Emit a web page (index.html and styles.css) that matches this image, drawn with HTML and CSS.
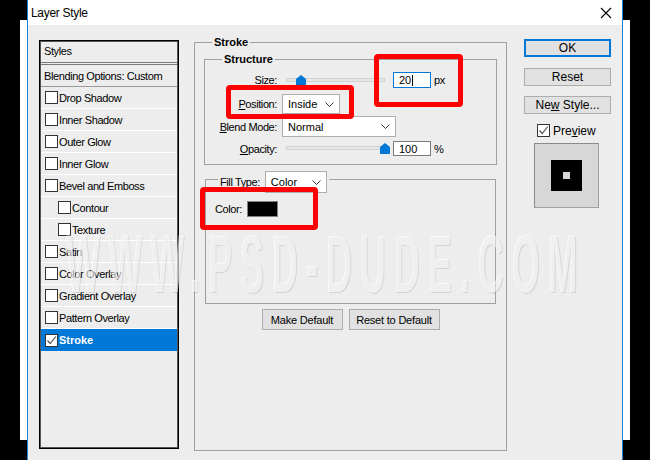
FILE: index.html
```html
<!DOCTYPE html>
<html>
<head>
<meta charset="utf-8">
<title>Layer Style</title>
<link rel="stylesheet" href="styles.css">
</head>
<body>
<div class="backwin"></div>
<div class="dialog">
  <div class="titlebar">
    <span class="title">Layer Style</span>
    <svg class="close" width="12" height="12" viewBox="0 0 12 12"><path d="M1 1 L11 11 M11 1 L1 11" stroke="#000" stroke-width="1.1" fill="none"/></svg>
  </div>
  <div class="content">
    <div class="styles-panel">
      <div class="sp-head">Styles</div>
      <div class="sp-row sp-blend">Blending Options: Custom</div>
      <div class="sp-row"><span class="cb"></span>Drop Shadow</div>
      <div class="sp-row"><span class="cb"></span>Inner Shadow</div>
      <div class="sp-row"><span class="cb"></span>Outer Glow</div>
      <div class="sp-row"><span class="cb"></span>Inner Glow</div>
      <div class="sp-row"><span class="cb"></span>Bevel and Emboss</div>
      <div class="sp-row sp-sub"><span class="cb"></span>Contour</div>
      <div class="sp-row sp-sub"><span class="cb"></span>Texture</div>
      <div class="sp-row"><span class="cb"></span>Satin</div>
      <div class="sp-row"><span class="cb"></span>Color Overlay</div>
      <div class="sp-row"><span class="cb"></span>Gradient Overlay</div>
      <div class="sp-row"><span class="cb"></span>Pattern Overlay</div>
      <div class="sp-row sp-active"><span class="cb"><svg width="11" height="11" viewBox="0 0 11 11"><path d="M1.5 5.5 L4.2 8.5 L9.8 1.5" stroke="#555" stroke-width="1.2" fill="none"/></svg></span>Stroke</div>
    </div>

    <fieldset class="grp grp-stroke">
      <legend class="lg-bold">Stroke</legend>
      <fieldset class="grp grp-structure">
        <legend class="lg-bold">Structure</legend>
        <div class="frow frow-size">
          <span class="flabel"><u>S</u>ize:</span>
          <div class="slider">
            <div class="track"></div>
            <svg class="thumb" style="left:10px" width="10" height="11" viewBox="0 0 10 11"><path d="M5 0 L10 4 L10 11 L0 11 L0 4 Z" fill="#0078d7"/></svg>
          </div>
          <div class="num num-focus">20<span class="caret"></span></div>
          <span class="unit">px</span>
        </div>
        <div class="frow frow-pos">
          <span class="flabel"><u>P</u>osition:</span>
          <div class="select sel-pos">Inside<svg class="chev" width="9" height="5" viewBox="0 0 9 5"><path d="M0.5 0.5 L4.5 4.5 L8.5 0.5" stroke="#333" stroke-width="1" fill="none"/></svg></div>
        </div>
        <div class="frow frow-blend">
          <span class="flabel"><u>B</u>lend Mode:</span>
          <div class="select sel-blend">Normal<svg class="chev" width="9" height="5" viewBox="0 0 9 5"><path d="M0.5 0.5 L4.5 4.5 L8.5 0.5" stroke="#333" stroke-width="1" fill="none"/></svg></div>
        </div>
        <div class="frow frow-op">
          <span class="flabel"><u>O</u>pacity:</span>
          <div class="slider">
            <div class="track"></div>
            <svg class="thumb" style="left:94px" width="10" height="11" viewBox="0 0 10 11"><path d="M5 0 L10 4 L10 11 L0 11 L0 4 Z" fill="#0078d7"/></svg>
          </div>
          <div class="num">100</div>
          <span class="unit">%</span>
        </div>
      </fieldset>

      <fieldset class="grp grp-fill">
        <legend class="lg-fill"><span class="fill-label"><u>F</u>ill Type:</span><div class="select sel-fill">Color<svg class="chev" width="9" height="5" viewBox="0 0 9 5"><path d="M0.5 0.5 L4.5 4.5 L8.5 0.5" stroke="#333" stroke-width="1" fill="none"/></svg></div></legend>
        <div class="color-row"><span>Color:</span><span class="swatch"></span></div>
      </fieldset>

      <div class="btnrow">
        <div class="btn btn-md">Make Default</div>
        <div class="btn btn-rd">Reset to Default</div>
      </div>
    </fieldset>

    <div class="rightcol">
      <div class="rbtn rbtn-ok">OK</div>
      <div class="rbtn">Reset</div>
      <div class="rbtn"><span>Ne<u>w</u> Style...</span></div>
      <div class="preview-row"><span class="cb"><svg width="11" height="11" viewBox="0 0 11 11"><path d="M1.5 5.5 L4.2 8.5 L9.8 1.5" stroke="#555" stroke-width="1.2" fill="none"/></svg></span><span>Pre<u>v</u>iew</span></div>
      <div class="preview-box"><div class="pv-square"><div class="pv-dot"></div></div></div>
    </div>
  </div>

  <div class="watermark">WWW.PSD-DUDE.COM</div>
  <div class="mark mark-size"></div>
  <div class="mark mark-pos"></div>
  <div class="mark mark-color"></div>
</div>
</body>
</html>
```
FILE: styles.css
```css
html, body {
  margin: 0;
  padding: 0;
}
body {
  width: 650px;
  height: 460px;
  background: #000;
  overflow: hidden;
  position: relative;
  font-family: "Liberation Sans", Arial, sans-serif;
  font-size: 11px;
  color: #000;
}
.backwin {
  position: absolute;
  left: 20px;
  top: 20px;
  width: 610px;
  height: 420px;
  background: #fff;
}
.dialog {
  position: absolute;
  left: 27px;
  top: 0;
  width: 596px;
  height: 460px;
  box-sizing: border-box;
  border-left: 1px solid #1883d7;
  border-right: 1px solid #1883d7;
  background: #ededed;
  overflow: hidden;
}
.titlebar {
  height: 25px;
  background: #fff;
  display: flex;
  align-items: center;
  justify-content: space-between;
  padding: 0 10px 0 3px;
}
.title {
  font-size: 12px;
  letter-spacing: -0.3px;
}
.close {
  display: block;
  margin-top: 1px;
}
.content {
  display: flex;
  align-items: flex-start;
  padding-left: 11px;
}

/* left styles list */
.styles-panel {
  margin-top: 15px;
  width: 140px;
  height: 409px;
  box-sizing: border-box;
  border: 1px solid #000;
  box-shadow: inset 1px 1px 0 #555, inset -1px -1px 0 #555;
  padding: 1px;
  letter-spacing: -0.4px;
}
.sp-head {
  height: 20px;
  line-height: 19px;
  padding-left: 3px;
  border-bottom: 3px double #7a7a7a;
}
.sp-row {
  height: 21px;
  border-bottom: 1px solid #fff;
  display: flex;
  align-items: center;
  padding-left: 4px;
}
.sp-blend {
  padding-left: 3px;
  border-bottom-color: #9a9a9a;
}
.sp-sub {
  padding-left: 17px;
}
.sp-active {
  background: #0078d7;
  color: #fff;
  font-weight: bold;
  letter-spacing: 0;
  border-bottom: none;
  height: 22px;
}
.cb {
  width: 13px;
  height: 13px;
  box-sizing: border-box;
  border: 1px solid #333;
  background: #fff;
  margin-right: 1px;
  display: flex;
  align-items: center;
  justify-content: center;
  flex: none;
}
.cb svg {
  display: block;
}

/* group boxes */
.grp {
  margin: 0;
  border: 1px solid #a0a0a0;
  min-width: 0;
  box-sizing: border-box;
}
.lg-bold {
  font-weight: bold;
  line-height: 14px;
  padding: 0 2px;
  margin-left: 8px;
}
.grp-stroke {
  margin-top: 10px;
  margin-left: 15px;
  width: 313px;
  height: 416px;
  padding: 0 9px;
}
.grp-structure {
  margin-top: 3px;
  width: 293px;
  padding: 0 9px 8px;
}
.frow {
  display: flex;
  align-items: center;
  letter-spacing: -0.4px;
}
.frow-size { margin-top: 6px; height: 16px; }
.frow-pos { margin-top: 6px; height: 20px; }
.frow-blend { margin-top: 2px; height: 21px; }
.frow-op { margin-top: 4px; height: 15px; }
.flabel {
  width: 63px;
  margin-right: 5px;
  text-align: right;
  flex: none;
  white-space: nowrap;
}
.slider {
  position: relative;
  width: 99px;
  height: 11px;
  margin-left: 4px;
  flex: none;
}
.track {
  margin-top: 3px;
  height: 4px;
  box-sizing: border-box;
  border: 1px solid #d2d2d2;
  background: #e7e7e7;
}
.thumb {
  position: absolute;
  top: 0;
  display: block;
}
.num {
  margin-left: 8px;
  width: 38px;
  height: 100%;
  box-sizing: border-box;
  border: 1px solid #7a7a7a;
  background: #fff;
  padding-left: 5px;
  display: flex;
  align-items: center;
  flex: none;
  letter-spacing: 0;
}
.num-focus {
  border-color: #0078d7;
}
.caret {
  width: 1px;
  height: 11px;
  background: #000;
  margin-left: 1px;
}
.unit {
  margin-left: 3px;
}
.select {
  height: 100%;
  box-sizing: border-box;
  border: 1px solid #adadad;
  background: #fff;
  display: flex;
  align-items: center;
  justify-content: space-between;
  padding: 0 5px 0 5px;
  flex: none;
  letter-spacing: 0;
}
.chev {
  display: block;
}
.sel-pos { width: 58px; }
.sel-blend { width: 114px; }

.grp-fill {
  margin-left: 1px;
  width: 291px;
  padding: 0 9px 86px;
}
.lg-fill {
  padding: 6px 2px 0;
  margin-left: 3px;
  display: flex;
  align-items: center;
  letter-spacing: -0.4px;
}
.fill-label {
  margin-right: 5px;
}
.sel-fill {
  width: 62px;
  height: 22px;
}
.color-row {
  margin-top: 8px;
  height: 16px;
  display: flex;
  align-items: center;
  letter-spacing: -0.4px;
}
.swatch {
  margin-left: 5px;
  width: 31px;
  height: 16px;
  box-sizing: border-box;
  border: 1px solid #808080;
  background: #000;
}
.btnrow {
  margin-top: 5px;
  display: flex;
  justify-content: center;
  gap: 6px;
}
.btn {
  height: 21px;
  box-sizing: border-box;
  border: 1px solid #adadad;
  background: #e1e1e1;
  display: flex;
  align-items: center;
  justify-content: center;
  letter-spacing: -0.2px;
}
.btn-md { width: 81px; }
.btn-rd { width: 91px; }

/* right column */
.rightcol {
  margin-top: 14px;
  margin-left: 17px;
  width: 87px;
  display: flex;
  flex-direction: column;
  font-size: 12px;
}
.rbtn {
  height: 18px;
  box-sizing: border-box;
  border: 1px solid #adadad;
  background: #e1e1e1;
  display: flex;
  align-items: center;
  justify-content: center;
  margin-bottom: 10px;
}
.rbtn-ok {
  border: 2px solid #0078d7;
  margin-bottom: 11px;
}
.preview-row {
  margin-top: 0;
  padding-left: 13px;
  height: 13px;
  display: flex;
  align-items: center;
}
.preview-row .cb {
  margin-right: 3px;
}
.preview-box {
  margin-top: 6px;
  margin-left: 10px;
  width: 65px;
  height: 65px;
  box-sizing: border-box;
  border: 1px solid #a0a0a0;
  border-left-color: #8a8a8a;
  border-top-color: #8a8a8a;
  background: #d7d7d7;
  display: flex;
  align-items: center;
  justify-content: center;
}
.pv-square {
  width: 31px;
  height: 31px;
  background: #000;
  display: flex;
  align-items: center;
  justify-content: center;
}
.pv-dot {
  width: 7px;
  height: 7px;
  background: #d7d7d7;
}

/* overlays */
.watermark {
  position: absolute;
  left: 38px;
  top: 223px;
  font-family: "Liberation Sans", Arial, sans-serif;
  font-weight: bold;
  font-size: 82px;
  line-height: 82px;
  letter-spacing: 18px;
  white-space: nowrap;
  color: rgba(255, 255, 255, 0.62);
  text-shadow: 2px 1px 0 rgba(0, 0, 0, 0.1);
  transform: scaleX(0.44);
  transform-origin: left top;
  pointer-events: none;
}
.mark {
  position: absolute;
  box-sizing: border-box;
  border: 5px solid #ff0000;
  border-radius: 4px;
  pointer-events: none;
}
.mark-size { left: 346px; top: 54px; width: 89px; height: 53px; }
.mark-pos { left: 198px; top: 85px; width: 128px; height: 34px; }
.mark-color { left: 172px; top: 187px; width: 118px; height: 43px; }
```
